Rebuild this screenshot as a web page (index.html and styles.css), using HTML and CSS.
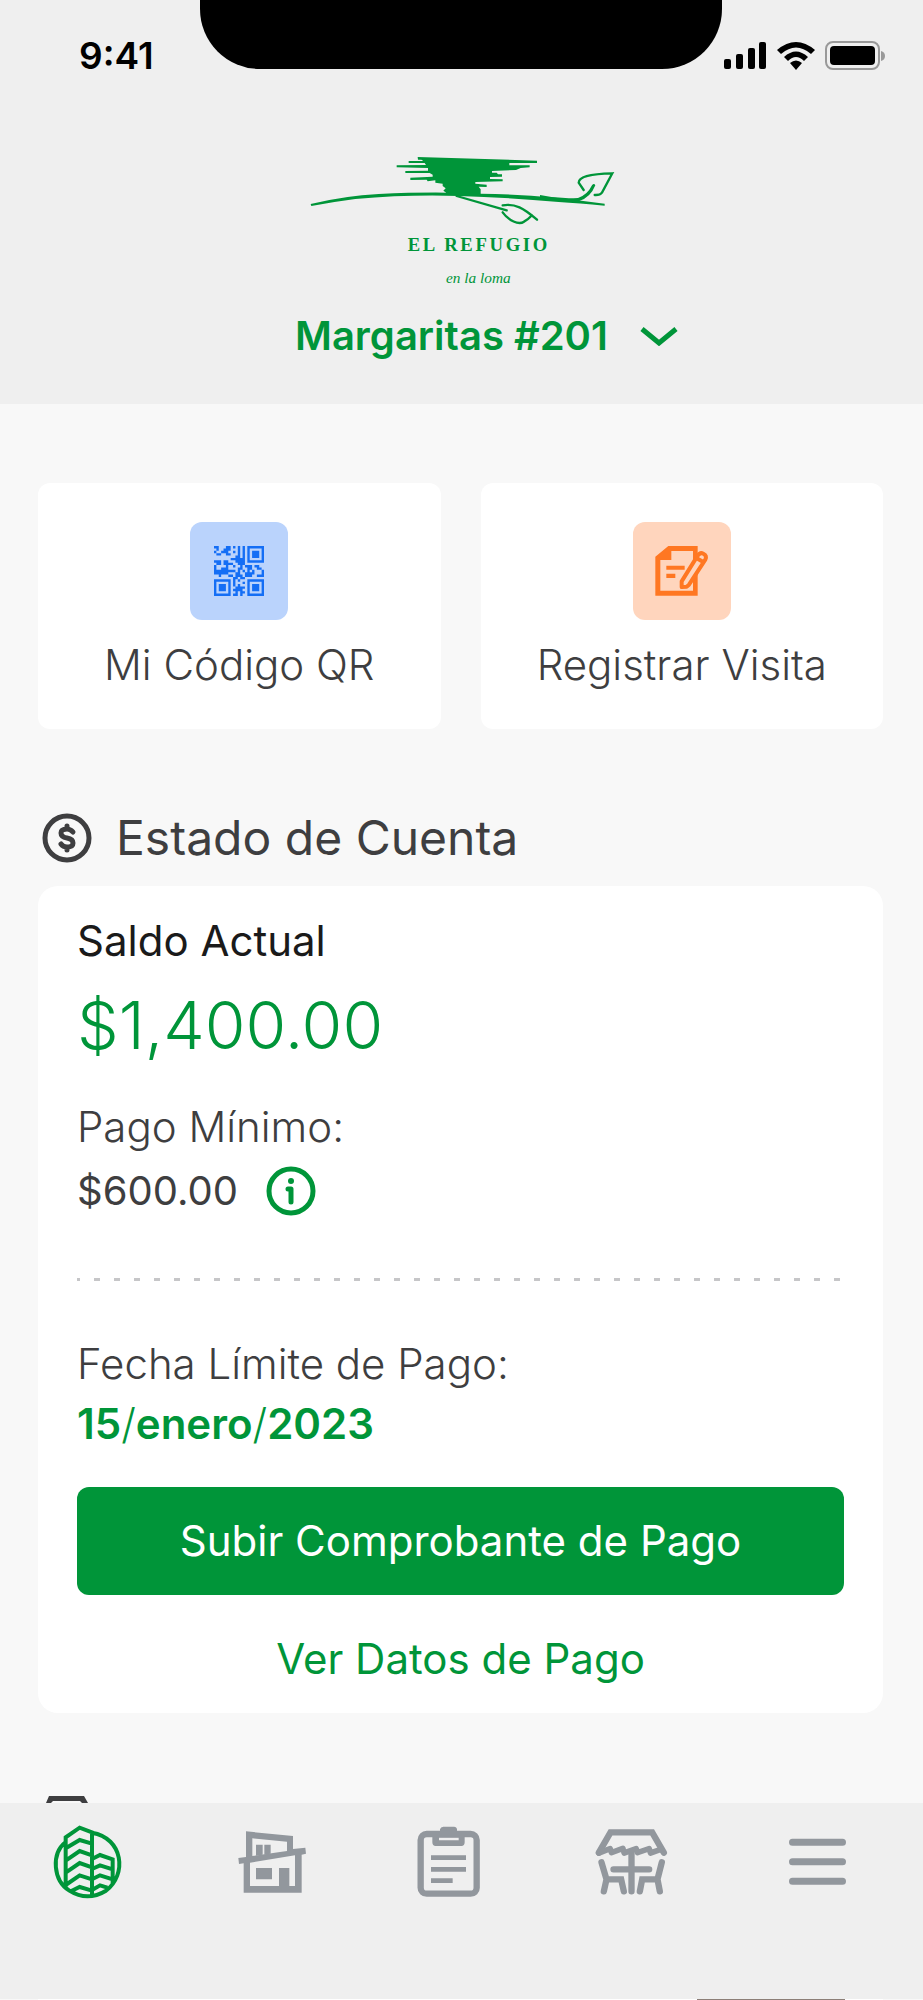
FILE: index.html
```html
<!DOCTYPE html>
<html lang="es">

<head>
  <meta charset="UTF-8">
  <meta name="viewport" content="width=device-width, initial-scale=1.0">
  <title>El Refugio en la loma</title>
  <link rel="stylesheet" href="styles.css">
</head>

<body>
  <header class="header">
    <div class="status-bar">
      <span class="time">9:41</span>
      <div class="notch"></div>
      <div class="status-icons">
        <svg width="43" height="28" viewBox="0 0 43 28">
          <rect x="0" y="17" width="7" height="10" rx="2" />
          <rect x="12" y="12" width="7" height="15" rx="2" />
          <rect x="24" y="6" width="7" height="21" rx="2" />
          <rect x="35" y="0" width="7" height="27" rx="2" />
        </svg>
        <svg width="38" height="28" viewBox="0 0 38 28">
          <path d="M0 8Q19-8 38 8L34 12Q19-1 4 12z" />
          <path d="M7 15Q19 4 31 15L27 19Q19 11 11 19z" />
          <path d="M13 21Q19 16 25 21L19 28z" />
        </svg>
        <svg width="60" height="30" viewBox="0 0 60 30">
          <rect x="1" y="1" width="53" height="27" rx="7" fill="none" stroke="#999" stroke-width="2" />
          <rect x="5" y="5" width="45" height="19" rx="4" />
          <path d="M56 10q4 1 4 5t-4 5z" fill="#999" />
        </svg>
      </div>
    </div>

    <svg class="logo" viewBox="0 0 1020 480" role="img" aria-label="El Refugio en la loma">
      <path d="M377 51L735 62V69L652 69V76H713V82L686 84L672 90L600 93V98H614L618 103H630V110L594 111V117L632 118V124L550 126V131L584 134V141L560 140L566 148V161Q740 163 938 191V197Q860 190 800 186Q640 172 500 168Q350 163 190 177Q120 186 58 198L56 192Q160 167 260 162Q370 157 463 158L454 152L461 145L452 138V131L430 128V121L407 124L404 119L355 120V113L422 110V104L413 99L340 99V93L408 92V84L314 82V76L402 75L398 69H350V63H394L388 59H378z" />
      <path d="M744 165Q800 178 858 174Q886 165 900 136Q906 128 910 136Q896 172 862 183Q800 184 744 173z" />
      <path class="stroke" d="M494 168L644 211M632 196C670 190 694 204 735 239M632 217C650 242 680 256 696 245Q708 239 720 226M875 150L860 128C860 110 890 102 961 100Q944 132 930 158Q924 166 908 165" />
      <text class="logo-name" x="347" y="333">EL REFUGIO</text>
      <text class="logo-sub" x="462" y="429">en la loma</text>
    </svg>

    <div class="unit">
      <select class="unit-select" aria-label="Unidad">
        <option>Margaritas #201</option>
      </select>
      <svg width="38" height="20" viewBox="0 0 38 20">
        <path d="M2 3L19 17L36 3" />
      </svg>
    </div>
  </header>

  <main class="content">
    <div class="actions">
      <button class="action">
        <span class="tile tile-blue">
          <svg width="50" height="50" viewBox="0 0 21 21">
            <path class="qr" d="M0 .5h2M5 .5h2M8 .5h1M10 .5h1M12 .5h1M1 1.5h1M4 1.5h3M10 1.5h1M12 1.5h1M0 2.5h1M3 2.5h3M8 2.5h1M10 2.5h1M12 2.5h1M1 3.5h2M5 3.5h2M10 3.5h1M12 3.5h1M9 4.5h2M12 4.5h1M7 5.5h2M9 5.5h4M0 6.5h3M4 6.5h2M9 6.5h4M1 7.5h2M4 7.5h4M10 7.5h3M0 8.5h1M5 8.5h1M8 8.5h1M11 8.5h1M13 8.5h3M17 8.5h2M0 9.5h1M3 9.5h3M10 9.5h2M14 9.5h2M18 9.5h2M0 10.5h6M6 10.5h3M10 10.5h1M12 10.5h1M14 10.5h1M16 10.5h1M20 10.5h1M0 11.5h6M9 11.5h2M13 11.5h4M20 11.5h1M2 12.5h1M6 12.5h2M9 12.5h3M13 12.5h3M18 12.5h3M8 13.5h2M11 13.5h2M8 14.5h1M10 14.5h1M8 15.5h1M12 15.5h1M8 16.5h1M10 16.5h1M9 17.5h4M8 18.5h2M10 18.5h2M9 19.5h1M11 19.5h2M8 20.5h2M11 20.5h1" />
            <path class="qr-finder" d="M14.5.5h6v6h-6zM.5 14.5h6v6h-6zM14.5 14.5h6v6h-6z" />
            <path d="M16 2h3v3h-3zM2 16h3v3h-3zM16 16h3v3h-3z" />
          </svg>
        </span>
        Mi Código QR
      </button>
      <button class="action">
        <span class="tile tile-orange">
          <svg width="54" height="50" viewBox="552 228 160 150">
            <path fill-rule="evenodd" d="M591 228H679V377H552V260zM600 243V270H567V362H665V243z" />
            <path d="M585 287H640V299H585zM585 311H612V324H585z" />
            <path class="pen" d="M631 351V334L679 257Q686 246 696 251Q708 257 702 269L653 344L646 350zM675 264L697 277" />
          </svg>
        </span>
        Registrar Visita
      </button>
    </div>

    <section>
      <h2 class="section-title">
        <svg width="50" height="50" viewBox="0 0 50 50">
          <circle cx="25" cy="25" r="22" />
          <path d="M31 19Q28 16 25 16Q19 16 19 20Q19 24 25 25Q31 26 31 30Q31 34 25 34Q21 34 19 31M25 13V16M25 34V37" />
        </svg>
        Estado de Cuenta
      </h2>

      <div class="account">
        <h3 class="label-dark">Saldo Actual</h3>
        <p class="balance">$1,400.00</p>

        <p class="label">Pago Mínimo:</p>
        <div class="minimum">
          <span>$600.00</span>
          <button class="info" aria-label="Información">
            <svg width="50" height="50" viewBox="0 0 50 50">
              <circle class="ring" cx="25" cy="25" r="22" />
              <circle cx="25" cy="15" r="3" />
              <path class="stem" d="M22 23H25V36" />
            </svg>
          </button>
        </div>

        <hr class="divider">

        <p class="label">Fecha Límite de Pago:</p>
        <p class="due-date">15<span>/</span>enero<span>/</span>2023</p>

        <button class="upload">Subir Comprobante de Pago</button>
        <a class="details" href="#">Ver Datos de Pago</a>
      </div>
    </section>

    <svg class="next-icon" width="42" height="7" viewBox="0 0 42 7">
      <path d="M0 7L3 0H38L42 7H36L34 5H7L5 7z" />
    </svg>
  </main>

  <nav class="tabs">
    <a class="active" href="#" aria-label="Inicio">
      <svg viewBox="156 120 216 240">
        <path class="line" d="M197 321V172L239 143L276 157V344M197 186C152 222 160 302 208 332Q262 366 318 332C382 284 370 174 276 158M276 237L300 225L338 238V312M197 205L239 180L276 191M197 242L239 213L276 226M197 278L239 249L276 262M197 315L239 286L276 298M214 333L239 321L276 332M276 267L300 256L338 268M276 298L300 286L338 298M276 330L300 316L322 323" />
      </svg>
    </a>
    <a href="#" aria-label="Casa">
      <svg viewBox="702 120 216 240">
        <path d="M715 234L738 231V154L879 168V207L916 203L918 221L905 224V338H731V250L717 252zM757 175V228L861 213V185zM750 248V318H837V264H868V318H885V226z" fill-rule="evenodd" />
        <path d="M768 194H788V224L768 227zM793 194H812V221L793 224zM768 264H816V298H768z" />
      </svg>
    </a>
    <a href="#" aria-label="Reportes">
      <svg viewBox="1251 120 216 240">
        <rect class="thick" x="1262" y="162" width="168" height="179" rx="18" />
        <path d="M1297 165H1320V148Q1322 140 1330 140H1362Q1370 140 1371 148V165H1394V187Q1394 198 1384 198H1307Q1297 198 1297 187zM1317 173V181H1376V173z" fill-rule="evenodd" />
        <path d="M1293 226H1398V240H1293zM1293 261H1398V275H1293zM1293 295H1358V309H1293z" />
      </svg>
    </a>
    <a href="#" aria-label="Amenidades">
      <svg viewBox="415 120 215 240">
        <path class="round" d="M414 218L449 157H574L609 218M512 218V334M458 268H565M422 247L437 298H481L489 334M437 298L429 334M603 247L590 298H544L537 334M590 298L597 334" />
        <path class="fringe" d="M414 219L448 206L452 218L486 205L490 219L526 206L530 218L565 206L569 219L600 208" />
      </svg>
    </a>
    <a href="#" aria-label="Menú">
      <svg viewBox="959 120 215 240">
        <path class="round bars" d="M993 187H1143M993 245H1143M993 304H1143" />
      </svg>
    </a>
  </nav>

  <div class="next-card">
    <div class="next-photo"></div>
  </div>
</body>

</html>
```
FILE: styles.css
```css
* {
  box-sizing: border-box;
}

body {
  margin: 0;
  background: #f8f8f8;
  color: #3e3e40;
  font-family: Inter, "Open Sans", sans-serif;
  font-size: 42px;
  font-weight: 300;
  line-height: 60px;
}

h2,
h3,
p {
  margin: 0;
}

button {
  border: none;
  font: inherit;
  color: inherit;
  cursor: pointer;
}

.header {
  background: #efefef;
  padding-bottom: 38px;
}

.status-bar {
  position: relative;
  display: flex;
  justify-content: space-between;
  align-items: center;
  height: 112px;
  padding: 0 38px 0 79px;
}

.time {
  color: #000;
  font-size: 37px;
  font-weight: 600;
}

/* phone notch over the status bar */
.notch {
  position: absolute;
  top: 0;
  left: 50%;
  width: 522px;
  height: 69px;
  margin-left: -262px;
  background: #000;
  border-radius: 0 0 60px 60px;
}

.status-icons {
  display: flex;
  align-items: center;
  gap: 10px;
}

.logo {
  display: block;
  width: 340px;
  height: 160px;
  margin: 28px auto 0;
  fill: #009539;
}

.logo .stroke {
  fill: none;
  stroke: #009539;
  stroke-width: 7;
  stroke-linecap: round;
}

.logo-name {
  font-family: "Liberation Serif", serif;
  font-size: 56px;
  font-weight: bold;
  letter-spacing: 8px;
}

.logo-sub {
  font-family: "Liberation Serif", serif;
  font-size: 46px;
  font-style: italic;
}

.unit {
  display: flex;
  justify-content: center;
  align-items: center;
  gap: 32px;
  height: 66px;
  padding: 6px 0 0 50px;
}

.unit-select {
  appearance: none;
  border: none;
  padding: 0;
  background: none;
  color: #009539;
  font: inherit;
  font-size: 40px;
  font-weight: 600;
  line-height: 60px;
}

.unit svg {
  fill: none;
  stroke: #009539;
  stroke-width: 5;
}

.content {
  padding: 79px 40px 0 38px;
}

.actions {
  display: grid;
  grid-template-columns: 1fr 1fr;
  gap: 40px;
  margin-bottom: 79px;
}

.action {
  display: flex;
  flex-direction: column;
  align-items: center;
  gap: 15px;
  padding: 39px 0 34px;
  background: #fff;
  border-radius: 12px;
}

.tile {
  display: flex;
  justify-content: center;
  align-items: center;
  width: 98px;
  height: 98px;
  border-radius: 12px;
}

.tile-blue {
  background: #bad3fc;
  fill: #146ef5;
}

.tile-orange {
  background: #ffd5bd;
  fill: #ff7722;
}

.qr {
  stroke: #146ef5;
}

.qr-finder {
  fill: none;
  stroke: #146ef5;
}

.pen {
  fill: #ffd5bd;
  stroke: #ff7722;
  stroke-width: 12;
  stroke-linejoin: round;
}

.section-title {
  display: flex;
  align-items: center;
  gap: 24px;
  padding-left: 4px;
  margin-bottom: 18px;
  font-size: 48px;
  font-weight: 400;
}

.section-title svg {
  fill: none;
  stroke: #3e3e40;
  stroke-width: 5;
  stroke-linecap: round;
}

.account {
  padding: 25px 39px 24px;
  background: #fff;
  border-radius: 20px;
}

.label-dark {
  color: #1a1a1a;
  font-size: 42px;
  font-weight: 400;
}

.balance {
  margin: 14px 0 32px;
  color: #009539;
  font-size: 66px;
  line-height: 80px;
}

.minimum {
  display: flex;
  align-items: center;
  gap: 28px;
  margin-top: 4px;
  font-size: 40px;
  font-weight: 400;
}

.info {
  display: flex;
  padding: 0;
  background: none;
  fill: #009539;
}

.ring,
.stem {
  fill: none;
  stroke: #009539;
  stroke-width: 5;
  stroke-linecap: round;
  stroke-linejoin: round;
}

.divider {
  height: 3px;
  margin: 57px 0 53px;
  border: none;
  background: repeating-linear-gradient(90deg, #c6c6c8 0 3px, transparent 3px 17px, #c6c6c8 17px 20px);
}

.due-date {
  color: #009539;
  font-weight: 600;
}

.due-date span {
  font-weight: 300;
}

.upload {
  display: block;
  width: 100%;
  height: 108px;
  margin: 33px 0 34px;
  background: #009539;
  border-radius: 12px;
  color: #fff;
  font-weight: 400;
}

.details {
  display: block;
  color: #009539;
  font-weight: 400;
  text-align: center;
  text-decoration: none;
}

/* top edge of the next section, cut by the tab bar */
.next-icon {
  display: block;
  margin: 83px 0 0 8px;
  fill: #3e3e40;
}

.tabs {
  display: flex;
  justify-content: space-between;
  padding: 17px 70px 99px 52px;
  background: #efefef;
}

.tabs a {
  display: flex;
}

.tabs svg {
  width: 72px;
  height: 80px;
  overflow: visible;
  fill: #92979d;
}

.tabs .line {
  fill: none;
  stroke: #009539;
  stroke-width: 12;
}

.tabs .thick {
  fill: none;
  stroke: #92979d;
  stroke-width: 19;
}

.tabs .round {
  fill: none;
  stroke: #92979d;
  stroke-width: 19;
  stroke-linecap: round;
}

.tabs .bars {
  stroke-width: 21;
}

.tabs .fringe {
  fill: none;
  stroke: #92979d;
  stroke-width: 17;
  stroke-linecap: round;
  stroke-linejoin: round;
}

.next-card {
  display: flex;
  justify-content: flex-end;
  height: 1px;
  margin: 0 40px 0 38px;
  padding-right: 38px;
  background: #fff;
}

.next-photo {
  width: 148px;
  background: #8c7f78;
}
```
